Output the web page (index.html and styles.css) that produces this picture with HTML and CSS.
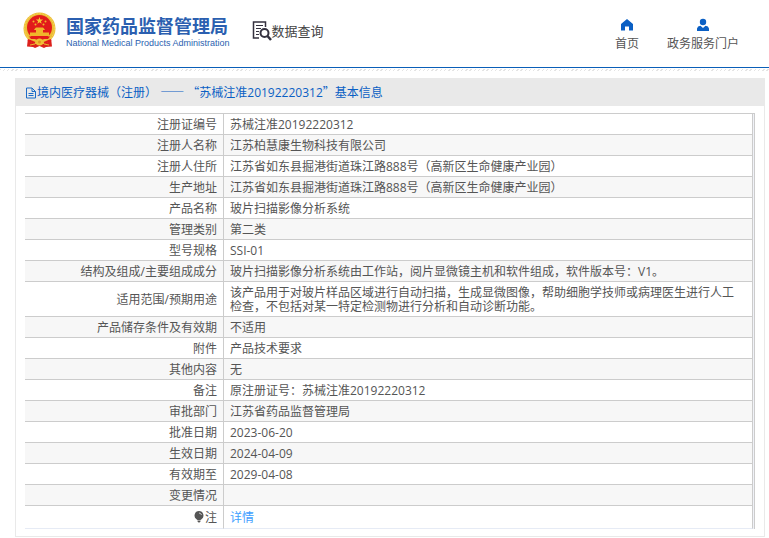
FILE: index.html
```
<!DOCTYPE html>
<html lang="zh-CN">
<head>
    <meta charset="UTF-8">
    <meta name="viewport" content="width=device-width, initial-scale=1.0">
    <title>国家药品监督管理局 数据查询</title>
    <link rel="stylesheet" href="styles.css">
</head>
<body>
    <header class="header">
        <a class="logo" href="#">
            <svg class="emblem" viewBox="0 0 33 37" aria-hidden="true">
                <path d="M5 26 L4 34.500 L10 35 L12 36 L16.500 34 L21 36 L23 35 L29 34.500 L28 26 Z" fill="#dc211c"/>
                <circle cx="16.500" cy="16.500" r="16" fill="#edbd35"/>
                <circle cx="16.500" cy="16.500" r="14.800" fill="none" stroke="#f6d65c" stroke-width="1" stroke-dasharray="2 1"/>
                <circle cx="16.500" cy="15.500" r="12.500" fill="#e21b1b"/>
                <path d="M16.500 5 L17.400 7.600 H20.100 L17.900 9.200 L18.700 11.800 L16.500 10.200 L14.300 11.800 L15.100 9.200 L12.900 7.600 H15.600 Z" fill="#f6c732"/>
                <g fill="#f0b62b">
                    <circle cx="10.500" cy="9.500" r="1"/>
                    <circle cx="12.500" cy="12.500" r="1"/>
                    <circle cx="20.500" cy="12.500" r="1"/>
                    <circle cx="22.500" cy="9.500" r="1"/>
                    <path d="M12 16.500 L13 15.500 H20 L21 16.500 L22 18 H11 Z M13 18 H20 V20.500 H26 V24 H7 V20.500 H13 Z"/>
                </g>
                <path d="M6 24.500 H27 L25 27 H8 Z" fill="#e21b1b"/>
                <circle cx="16.500" cy="30" r="3.500" fill="#f0bf35"/>
                <circle cx="16.500" cy="30" r="1.500" fill="#e2931f"/>
                <path d="M5 28 L12 31 M28 28 L21 31" stroke="#e21b1b" stroke-width="2"/>
                <path d="M7 33 L12 32 M26 33 L21 32" stroke="#e9b72c" stroke-width="1"/>
            </svg>
            <span class="logo-text">
                <span class="logo-cn">国家药品监督管理局</span>
                <span class="logo-en">National Medical Products Administration</span>
            </span>
        </a>
        <a class="query" href="#">
            <svg class="query-icon" viewBox="0 0 20 20" fill="none" stroke="#34323f" aria-hidden="true">
                <path d="M7 17 H1.500 V1 H13.500 V6" stroke-width="1.500"/>
                <path d="M4 4.500 H11 M4 7.500 H9 M4 10.500 H7 M4 13.500 H7" stroke-width="1"/>
                <circle cx="12.500" cy="12" r="4" stroke-width="2"/>
                <path d="M15.500 15 L19 19" stroke-width="2.500"/>
            </svg>
            <span>数据查询</span>
        </a>
        <nav class="nav">
            <a href="#">
                <svg viewBox="0 0 14 14" aria-hidden="true">
                    <path d="M7 1 L13 6 V12.500 H9 V8.500 H5 V12.500 H1 V6 Z" fill="#0a5fc4"/>
                </svg>
                <span>首页</span>
            </a>
            <a href="#">
                <svg viewBox="0 0 14 14" aria-hidden="true">
                    <circle cx="7" cy="4" r="3.200" fill="#0a5fc4"/>
                    <path d="M1 13 V10.500 Q1.500 8 4.500 7.800 L7 10 L9.500 7.800 Q12.500 8 13 10.500 V13 Z" fill="#0a5fc4"/>
                </svg>
                <span>政务服务门户</span>
            </a>
        </nav>
    </header>

    <main class="panel">
        <h1 class="panel-title">
            <svg class="doc-icon" viewBox="0 0 12 12" fill="none" stroke="#1d6cc8" aria-hidden="true">
                <path d="M1.500 1 H7 L10.500 4.500 V11 H1.500 Z M7 1 V4.500 H10.500 M3.500 6.500 H8.500 M3.500 8.500 H8.500"/>
            </svg>
            <span>境内医疗器械（注册） <span class="wide">——</span> <span class="wide">“</span>苏械注准20192220312<span class="wide">”</span>基本信息</span>
        </h1>
        <div class="panel-body">
            <table class="info">
                <tbody>
                    <tr><th scope="row">注册证编号</th><td>苏械注准20192220312</td></tr>
                    <tr><th scope="row">注册人名称</th><td>江苏柏慧康生物科技有限公司</td></tr>
                    <tr><th scope="row">注册人住所</th><td>江苏省如东县掘港街道珠江路888号（高新区生命健康产业园）</td></tr>
                    <tr><th scope="row">生产地址</th><td>江苏省如东县掘港街道珠江路888号（高新区生命健康产业园）</td></tr>
                    <tr><th scope="row">产品名称</th><td>玻片扫描影像分析系统</td></tr>
                    <tr><th scope="row">管理类别</th><td>第二类</td></tr>
                    <tr><th scope="row">型号规格</th><td>SSI-01</td></tr>
                    <tr><th scope="row">结构及组成/主要组成成分</th><td>玻片扫描影像分析系统由工作站，阅片显微镜主机和软件组成，软件版本号：V1。</td></tr>
                    <tr><th scope="row">适用范围/预期用途</th><td>该产品用于对玻片样品区域进行自动扫描，生成显微图像，帮助细胞学技师或病理医生进行人工检查，不包括对某一特定检测物进行分析和自动诊断功能。</td></tr>
                    <tr><th scope="row">产品储存条件及有效期</th><td>不适用</td></tr>
                    <tr><th scope="row">附件</th><td>产品技术要求</td></tr>
                    <tr><th scope="row">其他内容</th><td>无</td></tr>
                    <tr><th scope="row">备注</th><td>原注册证号：苏械注准20192220312</td></tr>
                    <tr><th scope="row">审批部门</th><td>江苏省药品监督管理局</td></tr>
                    <tr><th scope="row">批准日期</th><td>2023-06-20</td></tr>
                    <tr><th scope="row">生效日期</th><td>2024-04-09</td></tr>
                    <tr><th scope="row">有效期至</th><td>2029-04-08</td></tr>
                    <tr><th scope="row">变更情况</th><td></td></tr>
                    <tr class="note">
                        <th scope="row">
                            <svg class="bulb-icon" viewBox="0 0 10 12" aria-hidden="true">
                                <path d="M5 0 A4.500 4.500 0 0 1 7.500 8.200 L6.500 9 H3.500 L2.500 8.200 A4.500 4.500 0 0 1 5 0 Z M3.500 9.500 H6.500 V10.500 L5.500 11.500 H4.500 L3.500 10.500 Z" fill="#555"/>
                                <path d="M5 2 Q7 2 7.500 4" fill="none" stroke="#ccc" stroke-width="1"/>
                            </svg>注
                        </th>
                        <td><a href="#">详情</a></td>
                    </tr>
                </tbody>
            </table>
        </div>
    </main>
</body>
</html>
```

FILE: styles.css
```
* {
    box-sizing: border-box;
}

body {
    margin: 0;
    background-color: #fff;
    color: #555;
    font-family: "Open Sans", "Noto Sans CJK SC", sans-serif;
    font-size: 12px;
    line-height: 14px;
}

a {
    color: inherit;
    text-decoration: none;
}

/* Header */
.header {
    display: flex;
    align-items: center;
    height: 68px;
    padding: 0 30px 6px 23px;
    border-bottom: 1px solid #0a5fb8;
}

.logo {
    display: flex;
    align-items: center;
    gap: 10px;
    color: #2b5fb0;
}

.emblem {
    width: 33px;
    height: 37px;
}

.logo-text {
    display: flex;
    flex-direction: column;
    padding-top: 2px;
    white-space: nowrap;
}

.logo-cn {
    font-size: 18px;
    font-weight: bold;
    line-height: 22px;
}

.logo-en {
    font-family: "Liberation Sans", Arial, sans-serif;
    font-size: 9px;
    line-height: 12px;
}

.query {
    display: flex;
    align-items: center;
    margin-left: 22px;
    color: #444;
    font-size: 13px;
    white-space: nowrap;
}

.query-icon {
    width: 20px;
    height: 20px;
}

.nav {
    display: flex;
    gap: 28px;
    margin-left: auto;
    padding-top: 8px;
}

.nav a {
    display: flex;
    flex-direction: column;
    align-items: center;
    gap: 5px;
}

.nav svg {
    width: 14px;
    height: 14px;
}

/* Content panel */
.panel {
    position: relative;
    margin: 10px 4px 0 15px;
    border: 1px solid #e9e9e9;
}

/* dotted strip under the header */
.header::after {
    content: "";
    position: absolute;
    top: 69px;
    left: 0;
    right: 0;
    height: 2px;
    background: repeating-linear-gradient(135deg, #e4e4e4 0 1px, #fff 1px 3px);
}

.panel-title {
    display: flex;
    align-items: center;
    height: 27px;
    margin: 0;
    padding: 0 9px;
    background-color: #e9e9e9;
    color: #0a5fc4;
    font-size: 12px;
    font-weight: normal;
}

.wide {
    font-family: "Noto Sans CJK SC", sans-serif;
}

.doc-icon {
    width: 12px;
    height: 12px;
}

.panel-body {
    padding: 7px 9px;
}

.info {
    width: 100%;
    border-collapse: separate;
    border-spacing: 0;
    border-top: 1px solid #ccc;
    border-right: 1px solid #ccc;
    padding-right: 1px;
    background-color: #f0f2f8;
}

.info th,
.info td {
    height: 21px;
    padding: 4px 6px 2px;
    border-right: 1px solid #ccc;
    border-bottom: 1px solid #ccc;
    font-weight: normal;
}

.info th {
    width: 199px;
    text-align: right;
}

.info td {
    padding-right: 14px;
}

.info tr {
    background-color: #fff;
}

.info tr:nth-child(even) {
    background-color: #f7f7f7;
}

.info .note th,
.info .note td {
    height: 23px;
    border-bottom-color: #e6ebf5;
}

.info td a {
    color: #409eff;
}

.bulb-icon {
    width: 10px;
    height: 12px;
    margin-right: 1px;
    vertical-align: -1px;
}
```
